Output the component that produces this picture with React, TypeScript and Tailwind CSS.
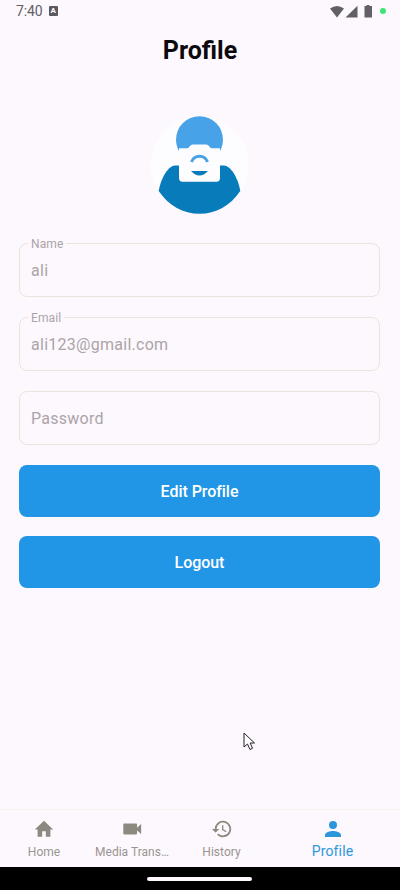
import React from "react";

const roboto = "font-[Roboto,sans-serif]";

function Field({ label, value, className }: { label?: string; value: string; className: string }) {
  return (
    <div className={`relative flex h-[54px] w-[361px] items-center rounded-[8px] border border-[#ebe4da] pl-[11px] text-[16px] tracking-[0.27px] text-[#aba4a8] ${className}`}>
      {label && (
        <span className="absolute left-[8px] top-[-7px] bg-[#fdf8fd] px-[3px] text-[12px] leading-[14px] tracking-[0.1px] text-[#aba4a8]">{label}</span>
      )}
      <span className="pt-[2px]">{value}</span>
    </div>
  );
}

function Action({ text, className }: { text: string; className: string }) {
  return (
    <button className={`flex h-[52px] w-[361px] items-center justify-center rounded-[8px] bg-[#2196e6] pt-[2px] text-[16px] font-medium tracking-[-0.05px] text-white ${className}`}>
      {text}
    </button>
  );
}

function NavItem({ path, text, active, className }: { path: string; text: string; active?: boolean; className: string }) {
  return (
    <div className={`flex flex-col items-center ${active ? "text-[#2b97da]" : "text-[#999591]"} ${className}`}>
      <div className="flex h-[22px] items-center justify-center">
        <svg className={active ? "h-[24px] w-[24px]" : "h-[22px] w-[22px] text-[#8c8a80]"} viewBox="0 0 24 24" fill="currentColor">
          <path d={path} />
        </svg>
      </div>
      <span className={active ? "mt-[3px] text-[14px] leading-[16px] tracking-[0.15px]" : "mt-[5px] text-[12px] leading-[14px] tracking-[0.02px]"}>{text}</span>
    </div>
  );
}

export default function App() {
  return (
    <div className={`relative flex h-[890px] w-[400px] flex-col overflow-hidden bg-[#fdf8fd] ${roboto}`}>
      <header className="flex h-[22px] shrink-0 items-center justify-between pl-[16px] pr-[14px] text-[#626066]">
        <div className="flex items-center gap-[6px] text-[14px] tracking-[-0.1px]">
          <span>7:40</span>
          <span className="flex h-[10px] w-[9px] items-center justify-center rounded-[1px] bg-[#5b595e] text-[8px] font-bold text-white">A</span>
        </div>
        <div className="flex items-center">
          <svg className="h-[13px] w-[49px]" viewBox="0 0 49 13" fill="currentColor">
            <path d="M7 12.500 0 3.500Q7-1.500 14 3.500ZM27.500.8V12.500H15.500ZM36.500 1V0h3v1H42v11.500h-7.500V1Z" />
          </svg>
          <span className="ml-[1px] h-[6px] w-[6px] rounded-full bg-[#3ce676]" />
        </div>
      </header>
      <h1 className="mt-[12px] h-[32px] pt-px text-center text-[25px] font-bold leading-[32px] text-[#0b090c]">Profile</h1>

      <svg className="ml-[150px] mt-[49px] h-[100px] w-[100px] shrink-0" viewBox="0 0 100 100">
        <circle cx="49.500" cy="50" r="49" fill="#fdfcff" />
        <circle cx="49.500" cy="24.700" r="23.500" fill="#48a2e8" />
        <path d="M8.700 76C11 62 19 50.500 25 50.500H74C80 50.500 88 62 90.300 76C80 91 66 98.800 49.500 98.800S19 91 8.700 76Z" fill="#087bba" />
        <path d="M29 33.300H38L41 30Q42 29.500 43 29.500H56Q57 29.500 58 30L61 33.300H70V63Q70 66.700 66.500 66.700H32.500Q29 66.700 29 63Z" fill="#fdfcff" />
        <path d="M41.500 47A8.500 8.500 0 0 1 57.500 47" fill="none" stroke="#48a2e8" strokeWidth="3" />
        <path d="M41 56H58Q49.500 65 41 56Z" fill="#087bba" />
      </svg>

      <main className="flex flex-col pl-[19px]">
        <Field label="Name" value="ali" className="mt-[28px]" />
        <Field label="Email" value="ali123@gmail.com" className="mt-[20px]" />
        <Field value="Password" className="mt-[20px]" />
        <Action text="Edit Profile" className="mt-[20px]" />
        <Action text="Logout" className="mt-[19px]" />
      </main>

      <svg className="absolute left-[243px] top-[732px] h-[19px] w-[13px]" viewBox="0 0 13 19">
        <path d="M1 1V15L4.500 12L7 17.500L9.500 16.300L7.200 11H11.500Z" fill="#fff" stroke="#242126" strokeWidth="1" />
      </svg>

      <nav className="mt-auto flex h-[58px] shrink-0 items-start border-t border-[#f8f1f0] pt-[8px]">
        <NavItem className="w-[88px]" text="Home" path="M10 20.500v-6h4v6h5v-8h3L12 3 2 12.500h3v8z" />
        <NavItem className="w-[88px]" text="Media Trans…" path="M17.500 10.500V7c0-.55-.45-1-1-1H3.500c-.55 0-1 .45-1 1v10c0 .55.45 1 1 1h13c.55 0 1-.45 1-1v-3.500l4.500 4v-11z" />
        <NavItem className="w-[91px]" text="History" path="M13 3a9 9 0 0 0-9 9H1l3.890 3.890.07.14L9 12H6a7 7 0 1 1 2.060 4.940l-1.420 1.420A9 9 0 1 0 13 3zm-1 5v5l4.280 2.540.72-1.210-3.500-2.080V8z" />
        <NavItem className="w-[133px] -ml-px" active text="Profile" path="M12 12a4 4 0 1 0 0-8 4 4 0 0 0 0 8zm0 2c-2.670 0-8 1.340-8 4v2h16v-2c0-2.660-5.330-4-8-4z" />
      </nav>
      <footer className="flex h-[23px] shrink-0 justify-center bg-black pt-[10px]">
        <div className="mr-px h-[4px] w-[105px] rounded-full bg-[#fdf8fd]" />
      </footer>
    </div>
  );
}
